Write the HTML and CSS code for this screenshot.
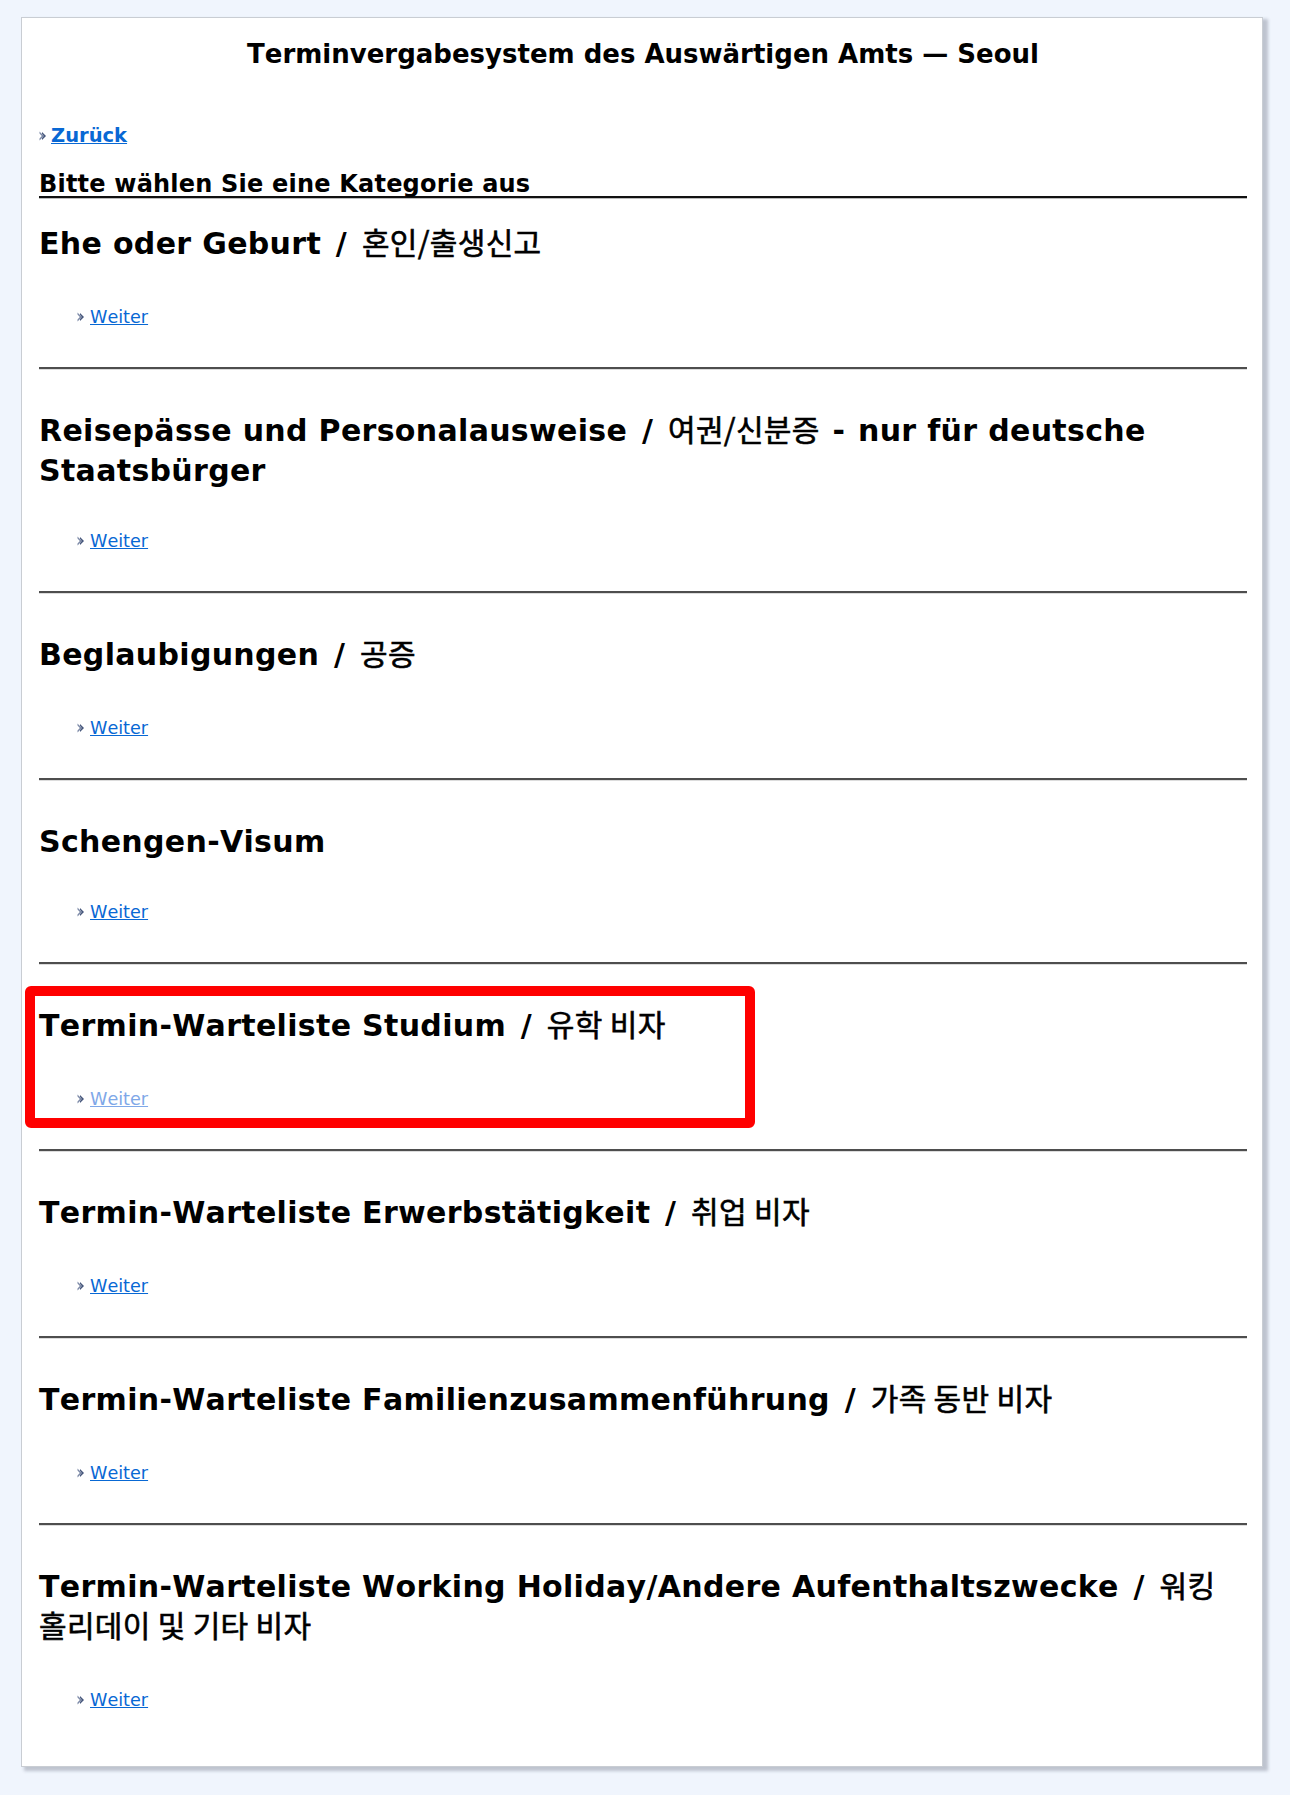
FILE: index.html
```html
<!DOCTYPE html>
<html lang="de">
<head>
<meta charset="utf-8">
<title>Terminvergabesystem des Auswärtigen Amts — Seoul</title>
<link rel="stylesheet" href="styles.css">
</head>
<body>
<div class="page">
  <h1 class="title">Terminvergabesystem des Auswärtigen Amts — Seoul</h1>

  <div class="back">
    <svg class="arrow" width="8" height="10" viewBox="0 0 8 10"><path class="a1" d="M0.5 0.5 L5 5 L0.5 9.5 L0.5 7.5 L2.8 5 L0.5 2.5Z" /><path class="a2" d="M3 1 L7 5 L3 9 L3 7.2 L4.8 5 L3 2.8Z" /></svg>
    <a href="#" class="back-link">Zurück</a>
  </div>

  <h2 class="choose">Bitte wählen Sie eine Kategorie aus</h2>

  <div class="section">
    <h3 class="cat ko-end">Ehe oder Geburt <span class="sep">/</span> <span class="ko">혼인/출생신고</span></h3>
    <div class="next"><svg class="arrow" width="8" height="10" viewBox="0 0 8 10"><path class="a1" d="M0.5 0.5 L5 5 L0.5 9.5 L0.5 7.5 L2.8 5 L0.5 2.5Z" /><path class="a2" d="M3 1 L7 5 L3 9 L3 7.2 L4.8 5 L3 2.8Z" /></svg><a href="#">Weiter</a></div>
  </div>
  <hr class="rule">

  <div class="section">
    <h3 class="cat">Reisepässe und Personalausweise <span class="sep">/</span> <span class="ko">여권/신분증</span> <span class="dash">-</span> nur für deutsche Staatsbürger</h3>
    <div class="next"><svg class="arrow" width="8" height="10" viewBox="0 0 8 10"><path class="a1" d="M0.5 0.5 L5 5 L0.5 9.5 L0.5 7.5 L2.8 5 L0.5 2.5Z" /><path class="a2" d="M3 1 L7 5 L3 9 L3 7.2 L4.8 5 L3 2.8Z" /></svg><a href="#">Weiter</a></div>
  </div>
  <hr class="rule">

  <div class="section">
    <h3 class="cat ko-end">Beglaubigungen <span class="sep">/</span> <span class="ko">공증</span></h3>
    <div class="next"><svg class="arrow" width="8" height="10" viewBox="0 0 8 10"><path class="a1" d="M0.5 0.5 L5 5 L0.5 9.5 L0.5 7.5 L2.8 5 L0.5 2.5Z" /><path class="a2" d="M3 1 L7 5 L3 9 L3 7.2 L4.8 5 L3 2.8Z" /></svg><a href="#">Weiter</a></div>
  </div>
  <hr class="rule">

  <div class="section">
    <h3 class="cat">Schengen-Visum</h3>
    <div class="next"><svg class="arrow" width="8" height="10" viewBox="0 0 8 10"><path class="a1" d="M0.5 0.5 L5 5 L0.5 9.5 L0.5 7.5 L2.8 5 L0.5 2.5Z" /><path class="a2" d="M3 1 L7 5 L3 9 L3 7.2 L4.8 5 L3 2.8Z" /></svg><a href="#">Weiter</a></div>
  </div>
  <hr class="rule">

  <div class="section">
    <h3 class="cat ko-end">Termin-Warteliste Studium <span class="sep">/</span> <span class="ko">유학 비자</span></h3>
    <div class="next"><svg class="arrow" width="8" height="10" viewBox="0 0 8 10"><path class="a1" d="M0.5 0.5 L5 5 L0.5 9.5 L0.5 7.5 L2.8 5 L0.5 2.5Z" /><path class="a2" d="M3 1 L7 5 L3 9 L3 7.2 L4.8 5 L3 2.8Z" /></svg><a href="#" class="faded">Weiter</a></div>
    <div class="highlight"></div>
  </div>
  <hr class="rule">

  <div class="section">
    <h3 class="cat ko-end">Termin-Warteliste Erwerbstätigkeit <span class="sep">/</span> <span class="ko">취업 비자</span></h3>
    <div class="next"><svg class="arrow" width="8" height="10" viewBox="0 0 8 10"><path class="a1" d="M0.5 0.5 L5 5 L0.5 9.5 L0.5 7.5 L2.8 5 L0.5 2.5Z" /><path class="a2" d="M3 1 L7 5 L3 9 L3 7.2 L4.8 5 L3 2.8Z" /></svg><a href="#">Weiter</a></div>
  </div>
  <hr class="rule">

  <div class="section">
    <h3 class="cat ko-end">Termin-Warteliste Familienzusammenführung <span class="sep">/</span> <span class="ko">가족 동반 비자</span></h3>
    <div class="next"><svg class="arrow" width="8" height="10" viewBox="0 0 8 10"><path class="a1" d="M0.5 0.5 L5 5 L0.5 9.5 L0.5 7.5 L2.8 5 L0.5 2.5Z" /><path class="a2" d="M3 1 L7 5 L3 9 L3 7.2 L4.8 5 L3 2.8Z" /></svg><a href="#">Weiter</a></div>
  </div>
  <hr class="rule">

  <div class="section last">
    <h3 class="cat ko-end">Termin-Warteliste Working Holiday/Andere Aufenthaltszwecke <span class="sep">/</span> <span class="ko">워킹 홀리데이 및 기타 비자</span></h3>
    <div class="next"><svg class="arrow" width="8" height="10" viewBox="0 0 8 10"><path class="a1" d="M0.5 0.5 L5 5 L0.5 9.5 L0.5 7.5 L2.8 5 L0.5 2.5Z" /><path class="a2" d="M3 1 L7 5 L3 9 L3 7.2 L4.8 5 L3 2.8Z" /></svg><a href="#">Weiter</a></div>
  </div>
</div>
</body>
</html>
```
FILE: styles.css
```css
html, body {
  margin: 0;
  padding: 0;
}

body {
  background: #f0f5fd;
  font-family: "DejaVu Sans", Verdana, "Noto Sans CJK KR", sans-serif;
  font-kerning: none;
  color: #000;
}

.page {
  margin: 17px 27px 28px 21px;
  background: #fff;
  border: 1px solid #c9cdd3;
  box-shadow: 4px 3px 3px 1px rgba(60, 70, 90, 0.28);
  padding: 0 15px 0 17px;
}

.title {
  margin: 20px 0 0;
  font-size: 26px;
  line-height: 32px;
  font-weight: bold;
  text-align: center;
}

.back {
  margin-top: 54px;
  display: flex;
  align-items: center;
  gap: 4px;
  height: 24px;
}

.back-link {
  font-size: 19.5px;
  line-height: 24px;
  font-weight: bold;
  color: #0868d4;
  text-decoration: underline;
}

.choose {
  margin: 24px 0 0;
  font-size: 24px;
  line-height: 24px;
  letter-spacing: 0.2px;
  font-weight: bold;
  border-bottom: 2px solid #111;
  box-shadow: 0 1px 0 #bbb;
}

.arrow {
  flex: none;
  display: block;
}

.arrow .a1 {
  fill: #7d8aa8;
}

.arrow .a2 {
  fill: #44557a;
}

.section {
  position: relative;
  padding-top: 41px;
  padding-bottom: 39px;
}

.choose + .section {
  padding-top: 26px;
}

.section.last {
  padding-bottom: 55px;
}

.cat {
  margin: 0;
  font-size: 30px;
  line-height: 40px;
  letter-spacing: 0.32px;
  font-weight: bold;
}

.cat.ko-end {
  padding-bottom: 3px;
}

.sep {
  margin: 0 4px;
}

.dash {
  margin: 0 2px;
}

.ko {
  font-family: "Noto Sans CJK KR", sans-serif;
  font-weight: normal;
  -webkit-text-stroke: 0.6px #000;
  line-height: 30px;
  word-break: keep-all;
}

.next {
  margin-top: 39px;
  padding-left: 38px;
  display: flex;
  align-items: center;
  gap: 5px;
  height: 22px;
}

.next a {
  font-size: 17.6px;
  line-height: 22px;
  color: #0868d4;
  text-decoration: underline;
}

.next a.faded {
  color: #7fa8e8;
}

.rule {
  margin: 0;
  height: 0;
  border: none;
  border-top: 2px solid #4e4e4e;
  border-bottom: 1px solid #dcdcdc;
}

.highlight {
  position: absolute;
  top: 21px;
  left: -14px;
  width: 730px;
  height: 142px;
  box-sizing: border-box;
  border: 10px solid #ff0000;
  border-radius: 6px;
  pointer-events: none;
}
```
